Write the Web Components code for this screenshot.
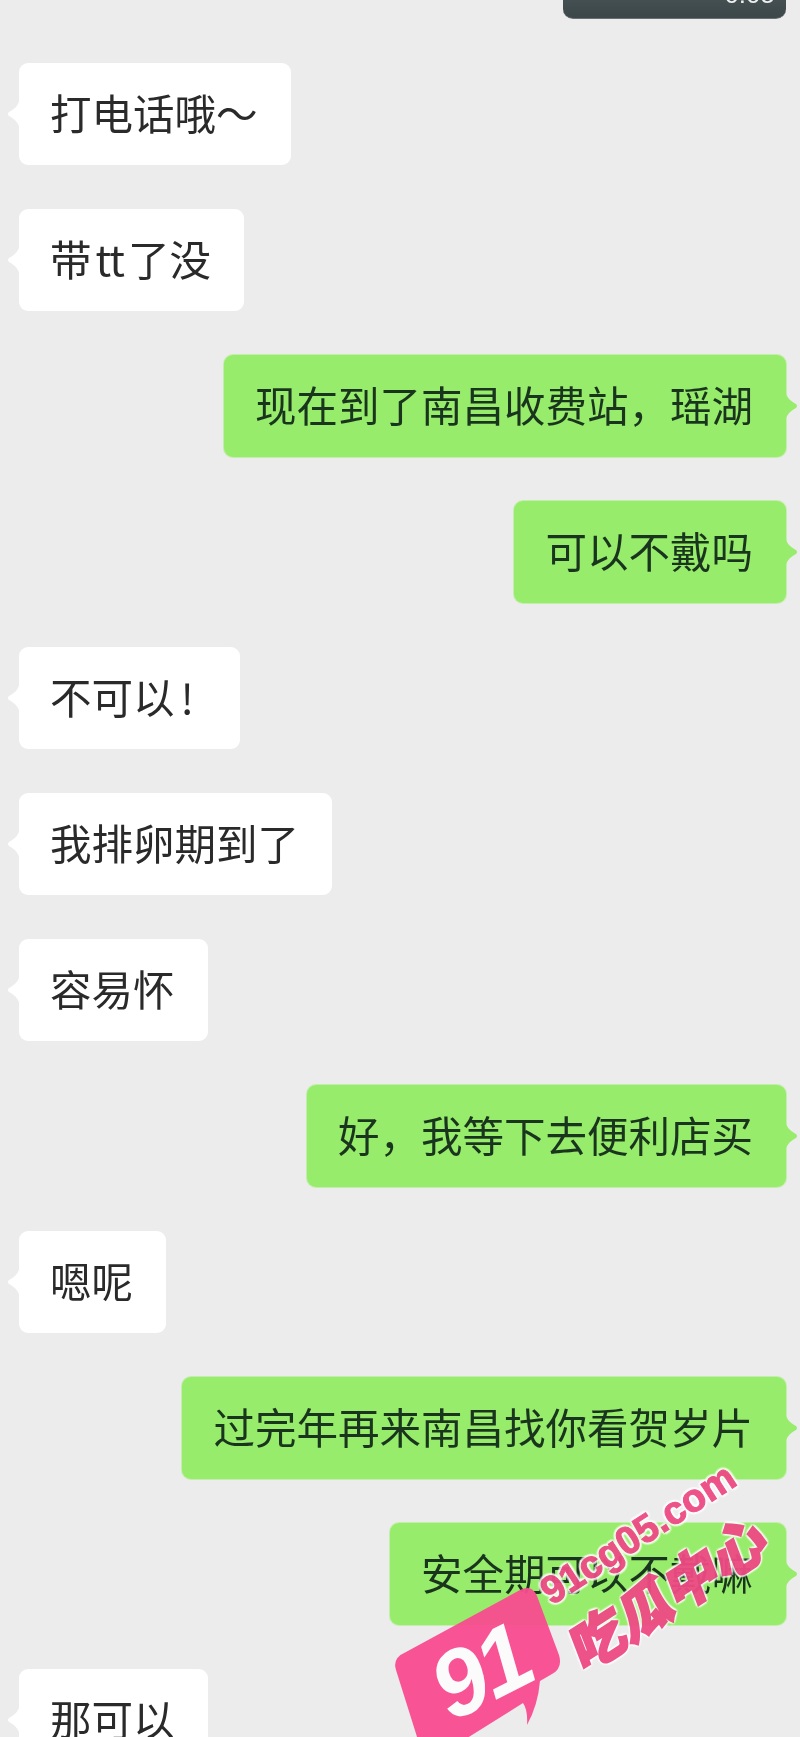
<!DOCTYPE html>
<html>
<head>
<meta charset="utf-8">
<style>
  html, body { margin: 0; height: 1737px; overflow: hidden; background: #ececec; }
  body { font-family: "Noto Sans CJK SC", "Liberation Sans", sans-serif; position: relative; }
</style>
</head>
<body>
<chat-list>
  <voice-bubble>0:05</voice-bubble>
  <chat-bubble side="left">打电话哦～</chat-bubble>
  <chat-bubble side="left">带<chat-latin style="margin: 0 4px">tt</chat-latin>了没</chat-bubble>
  <chat-bubble side="right">现在到了南昌收费站，瑶湖</chat-bubble>
  <chat-bubble side="right">可以不戴吗</chat-bubble>
  <chat-bubble side="left">不可以<chat-latin style="margin: 0 14px 0 6px">!</chat-latin></chat-bubble>
  <chat-bubble side="left">我排卵期到了</chat-bubble>
  <chat-bubble side="left">容易怀</chat-bubble>
  <chat-bubble side="right">好，我等下去便利店买</chat-bubble>
  <chat-bubble side="left">嗯呢</chat-bubble>
  <chat-bubble side="right">过完年再来南昌找你看贺岁片</chat-bubble>
  <chat-bubble side="right">安全期可以不戴嘛</chat-bubble>
  <chat-bubble side="left">那可以</chat-bubble>
</chat-list>
<site-watermark></site-watermark>

<script>
const templateChatList = document.createElement('template');
templateChatList.innerHTML = `
  <style>
    :host {
      display: flex;
      flex-direction: column;
      gap: 44px;
      padding: 0 14px 0 19px;
      height: 1737px;
      box-sizing: border-box;
      overflow: hidden;
    }
  </style>
  <slot></slot>
`;

class ChatList extends HTMLElement {
  constructor() {
    super();
    this.attachShadow({ mode: 'open' });
    this.shadowRoot.appendChild(templateChatList.content.cloneNode(true));
  }
}

const templateVoiceBubble = document.createElement('template');
templateVoiceBubble.innerHTML = `
  <style>
    :host {
      display: flex;
      justify-content: flex-end;
      align-items: flex-start;
      align-self: flex-end;
      flex: none;
      width: 223px;
      height: 19px;
      box-sizing: border-box;
      padding-right: 11px;
      overflow: hidden;
      border-radius: 0 0 10px 10px;
      background: linear-gradient(#434f50, #3b4749);
      border-bottom: 1px solid #6a7173;
      color: #eef1f1;
      font-family: "Liberation Sans", sans-serif;
      font-size: 26px;
      line-height: 26px;
      filter: blur(.6px);
    }
    span { margin-top: -19px; }
  </style>
  <span><slot></slot></span>
`;

class VoiceBubble extends HTMLElement {
  constructor() {
    super();
    this.attachShadow({ mode: 'open' });
    this.shadowRoot.appendChild(templateVoiceBubble.content.cloneNode(true));
  }
}

const templateChatBubble = document.createElement('template');
templateChatBubble.innerHTML = `
  <style>
    :host {
      --bubble: #fff;
      display: block;
      flex: none;
      position: relative;
      align-self: flex-start;
      box-sizing: border-box;
      height: 102px;
      padding: 0 33px 0 31px;
      border-radius: 9px;
      background: var(--bubble);
      color: #2a2a2a;
      font-size: 41.5px;
      font-weight: 400;
      line-height: 98px;
      white-space: nowrap;
    }
    :host([side="right"]) {
      --bubble: #98ec6b;
      align-self: flex-end;
      color: #1a351e;
      box-shadow: 0 0 0 1px rgba(170, 240, 135, .6);
    }
    svg {
      position: absolute;
      top: 33px;
      left: -12px;
      width: 13px;
      height: 36px;
      fill: var(--bubble);
    }
    :host([side="right"]) svg { left: auto; right: -12px; transform: scaleX(-1); }
    .text { display: block; position: relative; filter: blur(.5px); }
  </style>
  <svg viewBox="0 0 13 36"><path d="M13 0C13 8 8 13 2 16Q0 18 2 20C8 23 13 28 13 36Z"/></svg>
  <span class="text"><slot></slot></span>
`;

class ChatBubble extends HTMLElement {
  constructor() {
    super();
    this.attachShadow({ mode: 'open' });
    this.shadowRoot.appendChild(templateChatBubble.content.cloneNode(true));
  }
}

const templateChatLatin = document.createElement('template');
templateChatLatin.innerHTML = `
  <style>
    :host { display: inline-block; letter-spacing: -1px; }
  </style>
  <slot></slot>
`;

class ChatLatin extends HTMLElement {
  constructor() {
    super();
    this.attachShadow({ mode: 'open' });
    this.shadowRoot.appendChild(templateChatLatin.content.cloneNode(true));
  }
}

const templateWatermark = document.createElement('template');
templateWatermark.innerHTML = `
  <style>
    :host {
      position: absolute;
      inset: 0;
      overflow: hidden;
      pointer-events: none;
      color: #ee4a84;
    }
    .badge {
      position: absolute;
      left: 360px;
      top: 1420px;
      width: 440px;
      height: 317px;
    }
    .num {
      position: absolute;
      left: 432px;
      top: 1622px;
      font: italic 700 94px/100px "Liberation Sans", sans-serif;
      letter-spacing: -4px;
      color: #fbfbfb;
      transform: rotate(-27deg);
    }
    .url, .name {
      position: absolute;
      white-space: nowrap;
      text-align: center;
      opacity: .95;
      text-shadow:
        3px 0 1px rgba(255,255,255,.6), -3px 0 1px rgba(255,255,255,.6),
        0 3px 1px rgba(255,255,255,.6), 0 -3px 1px rgba(255,255,255,.6),
        2px 2px 1px rgba(255,255,255,.6), -2px -2px 1px rgba(255,255,255,.6),
        2px -2px 1px rgba(255,255,255,.6), -2px 2px 1px rgba(255,255,255,.6);
    }
    .url {
      left: 515px;
      top: 1507px;
      width: 246px;
      font: 700 39px/54px "Liberation Sans", sans-serif;
      -webkit-text-stroke: 1px #ee4a84;
      transform: rotate(-33deg);
    }
    .name {
      left: 550px;
      top: 1550px;
      width: 236px;
      font: 900 56px/80px "Noto Sans CJK SC", sans-serif;
      -webkit-text-stroke: 2px #ee4a84;
      transform: rotate(-33deg) skewX(-12deg);
    }
  </style>
  <svg class="badge" viewBox="0 0 440 317">
    <path d="M46 232L160 170Q172 164 177 176L199 235Q203 248 192 254L180 261Q178 285 167 305Q168 290 163 283L104 320L58 320L36 250Q32 238 46 232Z" fill="#f94c90" fill-opacity=".95"/>
  </svg>
  <div class="num">91</div>
  <div class="url">91cg05.com</div>
  <div class="name">吃瓜中心</div>
`;

class SiteWatermark extends HTMLElement {
  constructor() {
    super();
    this.attachShadow({ mode: 'open' });
    this.shadowRoot.appendChild(templateWatermark.content.cloneNode(true));
  }
}

customElements.define('chat-list', ChatList);
customElements.define('voice-bubble', VoiceBubble);
customElements.define('chat-bubble', ChatBubble);
customElements.define('chat-latin', ChatLatin);
customElements.define('site-watermark', SiteWatermark);
</script>
</body>
</html>
